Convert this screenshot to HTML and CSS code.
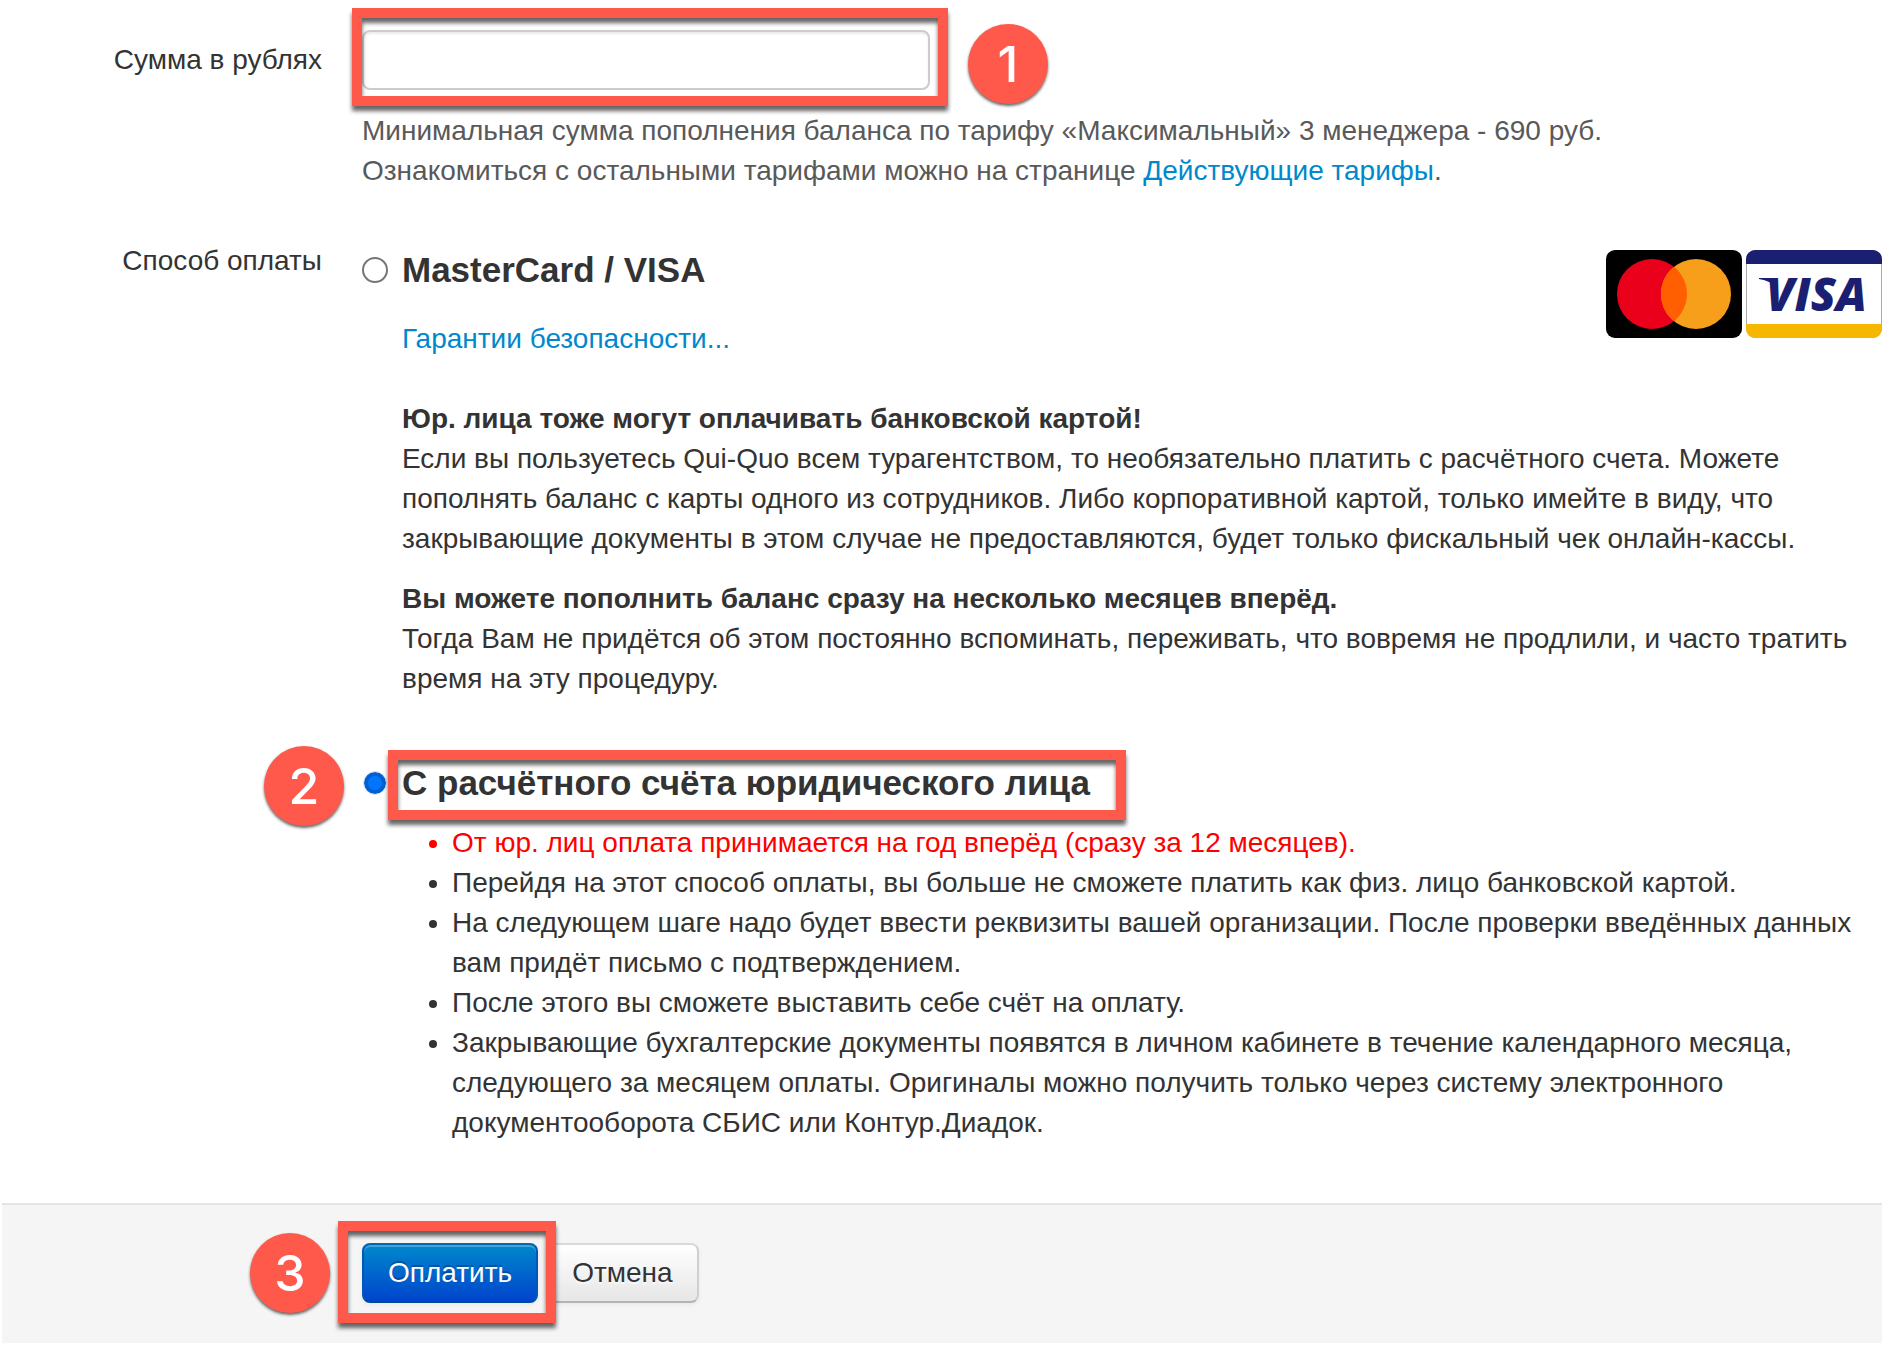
FILE: index.html
```html
<!DOCTYPE html>
<html lang="ru">
<head>
    <meta charset="UTF-8">
    <meta name="viewport" content="width=device-width, initial-scale=1.0">
    <title>Пополнение баланса</title>
    <link rel="stylesheet" href="styles.css">
</head>
<body>
    <form class="payment-form">
        <div class="control-group">
            <label class="control-label amount-label" for="amount">Сумма в рублях</label>
            <div class="controls">
                <div class="amount-field">
                    <input type="text" id="amount" class="amount-input">
                    <div class="mark mark-amount"></div>
                    <div class="step step-amount">1</div>
                </div>
                <p class="help-block">
                    Минимальная сумма пополнения баланса по тарифу «Максимальный» 3 менеджера - 690 руб.<br>
                    Ознакомиться с остальными тарифами можно на странице <a href="#">Действующие тарифы</a>.
                </p>
            </div>
        </div>

        <div class="control-group" role="radiogroup" aria-labelledby="method-label">
            <div class="control-label" id="method-label">Способ оплаты</div>
            <div class="controls methods">
                <div class="method">
                    <div class="method-header">
                        <div class="method-title">
                            <input type="radio" name="method" id="card">
                            <label for="card">MasterCard / VISA</label>
                        </div>
                        <div class="cards">
                            <svg width="136" height="88" viewBox="0 0 136 88" role="img" aria-label="MasterCard">
                                <rect width="136" height="88" rx="9" fill="#000"/>
                                <circle cx="46" cy="44" r="35" fill="#eb001b"/>
                                <circle cx="90" cy="44" r="35" fill="#f79e1b"/>
                                <path d="M68 16.8a35 35 0 0 1 0 54.4a35 35 0 0 1 0-54.4z" fill="#ff5f00"/>
                            </svg>
                            <svg width="136" height="88" viewBox="0 0 136 88">
                                <rect x="0.5" y="0.5" width="135" height="87" rx="9" fill="#fff" stroke="#aaa"/>
                                <path d="M0 14V9a9 9 0 0 1 9-9h118a9 9 0 0 1 9 9v5z" fill="#1a1f71"/>
                                <path d="M0 74v5a9 9 0 0 0 9 9h118a9 9 0 0 0 9-9v-5z" fill="#f7b600"/>
                                <path d="M13 28h16l2 10q-6-7-18-9z" fill="#1a1f71"/>
                                <text x="20" y="61" class="visa-text">VISA</text>
                            </svg>
                        </div>
                    </div>
                    <div class="method-body">
                        <p class="guarantee"><a href="#">Гарантии безопасности...</a></p>
                        <p>
                            <strong>Юр. лица тоже могут оплачивать банковской картой!</strong><br>
                            Если вы пользуетесь Qui-Quo всем турагентством, то необязательно платить с расчётного счета. Можете пополнять баланс с карты одного из сотрудников. Либо корпоративной картой, только имейте в виду, что закрывающие документы в этом случае не предоставляются, будет только фискальный чек онлайн-кассы.
                        </p>
                        <p>
                            <strong>Вы можете пополнить баланс сразу на несколько месяцев вперёд.</strong><br>
                            Тогда Вам не придётся об этом постоянно вспоминать, переживать, что вовремя не продлили, и часто тратить время на эту процедуру.
                        </p>
                    </div>
                </div>

                <div class="method">
                    <div class="method-title">
                        <input type="radio" name="method" id="account" checked>
                        <label for="account">С расчётного счёта юридического лица</label>
                        <div class="mark mark-account"></div>
                        <div class="step step-account">2</div>
                    </div>
                    <ul class="notes">
                        <li class="important">От юр. лиц оплата принимается на год вперёд (сразу за 12 месяцев).</li>
                        <li>Перейдя на этот способ оплаты, вы больше не сможете платить как физ. лицо банковской картой.</li>
                        <li>На следующем шаге надо будет ввести реквизиты вашей организации. После проверки введённых данных вам придёт письмо с подтверждением.</li>
                        <li>После этого вы сможете выставить себе счёт на оплату.</li>
                        <li>Закрывающие бухгалтерские документы появятся в личном кабинете в течение календарного месяца, следующего за месяцем оплаты. Оригиналы можно получить только через систему электронного документооборота СБИС или Контур.Диадок.</li>
                    </ul>
                </div>
            </div>
        </div>

        <div class="form-actions">
            <div class="submit">
                <button type="submit" class="btn btn-primary">Оплатить</button>
                <div class="mark mark-submit"></div>
                <div class="step step-submit">3</div>
            </div>
            <button type="button" class="btn">Отмена</button>
        </div>
    </form>
</body>
</html>
```
FILE: styles.css
```css
* {
    box-sizing: border-box;
}

body {
    margin: 0;
    background: #fff;
    color: #333;
    font-family: "Liberation Sans", Arial, sans-serif;
    font-size: 28px;
    line-height: 40px;
}

p {
    margin: 0 0 20px;
}

a {
    color: #0088cc;
    text-decoration: none;
}

a:hover {
    text-decoration: underline;
}

.payment-form {
    padding: 30px 8px 16px 2px;
}

/* Form rows */
.control-group {
    display: grid;
    grid-template-columns: 320px minmax(0, 1fr);
    column-gap: 40px;
    margin-bottom: 50px;
}

.control-label {
    text-align: right;
}

.amount-label {
    padding-top: 10px;
}

.amount-field {
    position: relative;
    width: 568px;
    max-width: 100%;
    margin-bottom: 21px;
}

.amount-input {
    display: block;
    width: 100%;
    height: 60px;
    padding: 8px 12px;
    border: 2px solid #ccc;
    border-radius: 8px;
    box-shadow: inset 0 2px 2px rgba(0, 0, 0, 0.08);
    font: inherit;
    color: #555;
}

.help-block {
    margin: 0;
    color: #595959;
}

/* Payment methods */
.methods {
    padding-top: 9px;
}

.method + .method {
    margin-top: 64px;
}

.method-header {
    display: flex;
    justify-content: space-between;
    align-items: flex-start;
    height: 69px;
}

.method-title {
    position: relative;
    display: flex;
    align-items: center;
    width: max-content;
    max-width: 100%;
    font-size: 35px;
    font-weight: bold;
}

.method-title input {
    appearance: none;
    flex: none;
    width: 26px;
    height: 26px;
    margin: 0 14px 0 0;
    border: 2px solid #767676;
    border-radius: 50%;
    background: #fff;
}

.method-title input:checked {
    width: 22px;
    height: 22px;
    margin: 0 16px 0 2px;
    border: 4px solid #0060d0;
    background: #0075ff;
    outline: 1px solid #d5e4f7;
}

.cards {
    display: flex;
    gap: 4px;
}

.visa-text {
    font: italic 800 46px "Open Sans", sans-serif;
    fill: #1a1f71;
}

.method-body {
    padding-left: 40px;
}

.method-body p:last-child {
    margin-bottom: 0;
}

.method-body .guarantee {
    margin-bottom: 40px;
}

.notes {
    margin: 20px 0 0;
    padding-left: 90px;
}

.important {
    color: #f00;
}

/* Buttons */
.form-actions {
    display: flex;
    gap: 8px;
    margin-top: 60px;
    padding: 38px 40px 40px 360px;
    border-top: 2px solid #e5e5e5;
    background: #f5f5f5;
}

.submit {
    position: relative;
}

.btn {
    height: 60px;
    padding: 0 24px;
    border: 2px solid #ccc;
    border-color: #d9d9d9 #d0d0d0 #b3b3b3;
    border-radius: 8px;
    background: linear-gradient(#fff, #e6e6e6);
    box-shadow: inset 0 2px 0 rgba(255, 255, 255, 0.2), 0 2px 4px rgba(0, 0, 0, 0.05);
    color: #333;
    font: inherit;
    text-shadow: 0 2px 2px rgba(255, 255, 255, 0.75);
    cursor: pointer;
}

.btn-primary {
    border-color: #0067b0 #0057b5 #004a9c;
    background: linear-gradient(#0088cc, #0044cc);
    box-shadow: inset 0 2px 0 rgba(255, 255, 255, 0.25), 0 2px 4px rgba(0, 0, 0, 0.05);
    color: #fff;
    text-shadow: 0 -2px 0 rgba(0, 0, 0, 0.25);
}

/* Step marks drawn over the form */
.mark {
    position: absolute;
    z-index: 1;
    border: 10px solid #ff594c;
    filter: drop-shadow(0 5px 2px rgba(0, 0, 0, 0.6));
    pointer-events: none;
}

.mark-amount {
    inset: -22px -18px -16px -10px;
}

.mark-account {
    inset: -13px -36px -17px 26px;
}

.mark-submit {
    inset: -22px -18px -20px -24px;
}

.step {
    position: absolute;
    z-index: 1;
    width: 80px;
    height: 80px;
    border-radius: 50%;
    background: #ff594c;
    box-shadow: 0 2px 3px rgba(0, 0, 0, 0.6);
    color: #fff;
    font-family: Inter, sans-serif;
    font-size: 50px;
    font-weight: 500;
    line-height: 80px;
    text-align: center;
}

.step-amount {
    top: -6px;
    left: calc(100% + 38px);
}

.step-account {
    top: -17px;
    left: -98px;
}

.step-submit {
    top: -10px;
    left: -112px;
}
```
